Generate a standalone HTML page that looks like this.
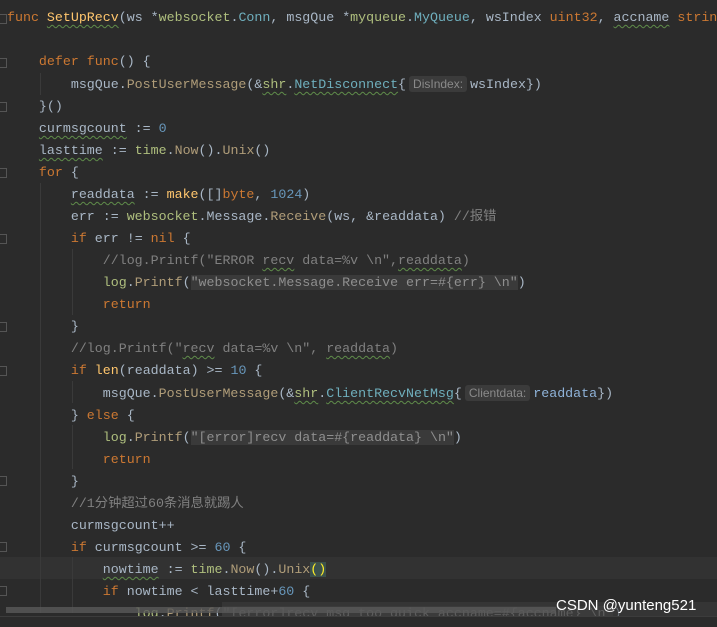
<!DOCTYPE html>
<html><head><meta charset="utf-8"><style>
body{margin:0;background:#2b2b2b;width:717px;height:626px;overflow:hidden;position:relative}
pre{margin:0;position:absolute;left:7px;top:7px;font-family:"Liberation Mono","Noto Sans CJK SC",monospace;font-size:13.3px;line-height:22px;color:#a9b7c6;white-space:pre}
.k{color:#cc7832}.f{color:#ffc66d}.p{color:#afbf7e}.t{color:#6fafbd}.m{color:#b09d79}.n{color:#6897bb}.c{color:#808080}.s{color:#6a8759}
.g{background:#3a3a3a;color:#8f8f8f}
.w{text-decoration:underline wavy #5f8c4a;text-decoration-thickness:1px;text-underline-offset:3px}
.h{font-family:"Liberation Sans",sans-serif;font-size:12px;background:#3b3b3b;color:#8a8a8a;border-radius:3px;padding:1px 4px;margin:0 3px}
.cur{position:absolute;left:0;right:0;top:557px;height:22px;background:#323232}
.ig{position:absolute;width:1px;background:#3a3a3a}
.fold{position:absolute;left:0;width:6px;height:8px;border:1px solid #555;border-left:none}
</style></head><body>
<div class="cur"></div>
<div class="ig" style="left:40px;top:73px;height:22px"></div>
<div class="ig" style="left:40px;top:183px;height:430px"></div>
<div class="ig" style="left:72px;top:249px;height:66px"></div>
<div class="ig" style="left:72px;top:381px;height:22px"></div>
<div class="ig" style="left:72px;top:425px;height:44px"></div>
<div class="ig" style="left:72px;top:557px;height:56px"></div>
<div class="fold" style="top:14px"></div><div class="fold" style="top:58px"></div><div class="fold" style="top:102px"></div><div class="fold" style="top:168px"></div><div class="fold" style="top:234px"></div><div class="fold" style="top:322px"></div><div class="fold" style="top:366px"></div><div class="fold" style="top:476px"></div><div class="fold" style="top:542px"></div><div class="fold" style="top:586px"></div>
<pre><span class="k">func</span> <span class="f w">SetUpRecv</span>(ws *<span class="p">websocket</span>.<span class="t">Conn</span>, msgQue *<span class="p">myqueue</span>.<span class="t">MyQueue</span>, wsIndex <span class="k">uint32</span>, <span class="w">accname</span> <span class="k">string</span>

    <span class="k">defer func</span>() {
        msgQue.<span class="m">PostUserMessage</span>(&amp;<span class="p w">shr</span>.<span class="t w">NetDisconnect</span>{<span class="h">DisIndex:</span>wsIndex})
    }()
    <span class="w">curmsgcount</span> := <span class="n">0</span>
    <span class="w">lasttime</span> := <span class="p">time</span>.<span class="m">Now</span>().<span class="m">Unix</span>()
    <span class="k">for</span> {
        <span class="w">readdata</span> := <span class="f">make</span>([]<span class="k">byte</span>, <span class="n">1024</span>)
        err := <span class="p">websocket</span>.Message.<span class="m">Receive</span>(ws, &amp;readdata) <span class="c">//报错</span>
        <span class="k">if</span> err != <span class="k">nil</span> {
            <span class="c">//log.Printf("ERROR <span class="w">recv</span> data=%v \n",<span class="w">readdata</span>)</span>
            <span class="p">log</span>.<span class="m">Printf</span>(<span class="g">"websocket.Message.Receive err=#{err} \n"</span>)
            <span class="k">return</span>
        }
        <span class="c">//log.Printf("<span class="w">recv</span> data=%v \n", <span class="w">readdata</span>)</span>
        <span class="k">if</span> <span class="f">len</span>(readdata) &gt;= <span class="n">10</span> {
            msgQue.<span class="m">PostUserMessage</span>(&amp;<span class="p w">shr</span>.<span class="t w">ClientRecvNetMsg</span>{<span class="h">Clientdata:</span><span style="color:#8fb3d9">readdata</span>})
        } <span class="k">else</span> {
            <span class="p">log</span>.<span class="m">Printf</span>(<span class="g">"[error]recv data=#{readdata} \n"</span>)
            <span class="k">return</span>
        }
        <span class="c">//1分钟超过60条消息就踢人</span>
        curmsgcount++
        <span class="k">if</span> curmsgcount &gt;= <span class="n">60</span> {
            <span class="w">nowtime</span> := <span class="p">time</span>.<span class="m">Now</span>().<span class="m">Unix</span><span style="color:#ffef28;background:#3b514d">()</span>
            <span class="k">if</span> nowtime &lt; lasttime+<span class="n">60</span> {
                <span class="p">log</span>.<span class="m">Printf</span>(<span class="g">"[error]recv msg too quick accname=#{accname} \n"</span>)</pre>
<div style="position:absolute;left:222px;top:602px;width:495px;height:14px;background:rgba(60,60,60,.6)"></div>
<div style="position:absolute;left:6px;top:607px;width:550px;height:6px;background:#5a5a5a;opacity:.8"></div>
<div style="position:absolute;left:0;top:616px;width:717px;height:10px;background:#2b2b2b;border-top:1px solid #3c3c3c"></div>
<div style="position:absolute;left:556px;top:597px;font-family:'Liberation Sans',sans-serif;font-size:15px;color:#fff">CSDN @yunteng521</div>
</body></html>
